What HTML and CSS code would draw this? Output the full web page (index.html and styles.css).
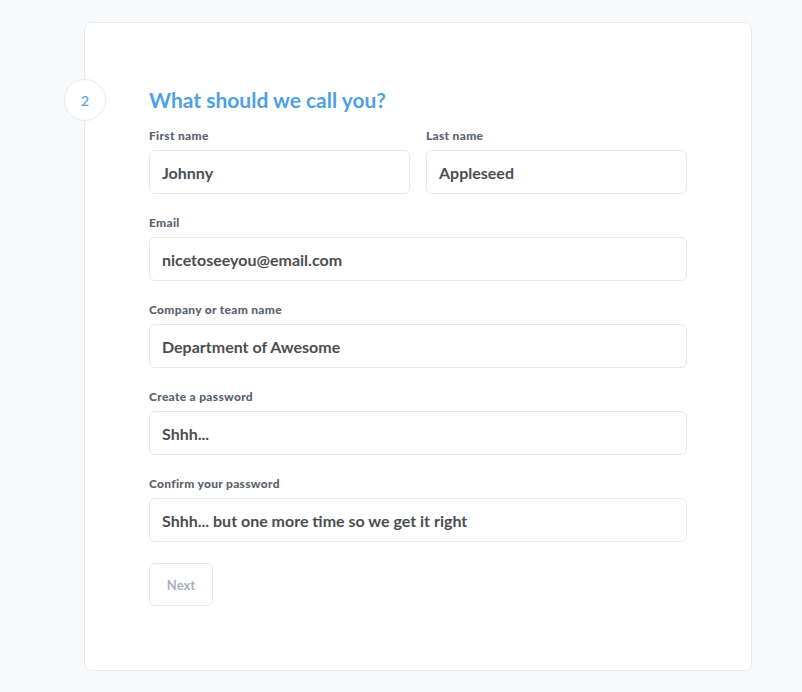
FILE: index.html
```html
<!DOCTYPE html>
<html>
<head>
<meta charset="utf-8">
<link rel="stylesheet" href="styles.css">
</head>
<body>
<div class="card">
  <div class="step">2</div>
  <h1 class="title">What should we call you?</h1>
  <div class="row">
    <div class="field">
      <label class="label">First name</label>
      <div class="input">Johnny</div>
    </div>
    <div class="field">
      <label class="label">Last name</label>
      <div class="input">Appleseed</div>
    </div>
  </div>
  <div class="field">
    <label class="label">Email</label>
    <div class="input">nicetoseeyou@email.com</div>
  </div>
  <div class="field">
    <label class="label">Company or team name</label>
    <div class="input">Department of Awesome</div>
  </div>
  <div class="field">
    <label class="label">Create a password</label>
    <div class="input">Shhh...</div>
  </div>
  <div class="field last">
    <label class="label">Confirm your password</label>
    <div class="input">Shhh... but one more time so we get it right</div>
  </div>
  <button class="btn">Next</button>
</div>
</body>
</html>
```

FILE: styles.css
```css
html, body {
  margin: 0;
  padding: 0;
  background: #f8f9fb;
  font-family: Lato, "Open Sans", sans-serif;
}
body {
  padding: 22px 0 0 84px;
  height: 692px;
  box-sizing: border-box;
  overflow: hidden;
}
.card {
  position: relative;
  width: 668px;
  height: 649px;
  box-sizing: border-box;
  background: #fff;
  border: 1px solid #e8e9eb;
  border-radius: 7px;
  padding: 65px 64px 0 64px;
}
.step {
  position: absolute;
  left: -21px;
  top: 56px;
  width: 42px;
  height: 42px;
  border-radius: 50%;
  border: 1px solid #e8e9eb;
  background: #fff;
  box-sizing: border-box;
  display: flex;
  align-items: center;
  justify-content: center;
  color: #4e9fe5;
  font-size: 14px;
  font-weight: 500;
}
.title {
  margin: 0 0 17px 0;
  font-size: 21px;
  line-height: 24px;
  font-weight: 700;
  color: #4e9fe5;
}
.row {
  display: flex;
  gap: 16px;
}
.row .field {
  flex: 1;
}
.field {
  margin-bottom: 22px;
}
.field.last {
  margin-bottom: 21px;
}
.label {
  display: block;
  font-size: 12px;
  line-height: 14px;
  font-weight: 900;
  letter-spacing: 0.3px;
  color: #5b6270;
  margin-bottom: 7px;
}
.input {
  height: 44px;
  box-sizing: border-box;
  border: 1px solid #e6e7e9;
  border-radius: 6px;
  padding: 0 12px;
  display: flex;
  align-items: center;
  font-size: 16px;
  font-weight: 700;
  color: #4d4d4f;
}
.btn {
  display: block;
  width: 64px;
  height: 43px;
  border: 1px solid #e6e7e9;
  border-radius: 6px;
  background: #fff;
  font-family: Lato, sans-serif;
  font-size: 13px;
  font-weight: 700;
  color: #aab1bc;
  padding: 0;
}
```
